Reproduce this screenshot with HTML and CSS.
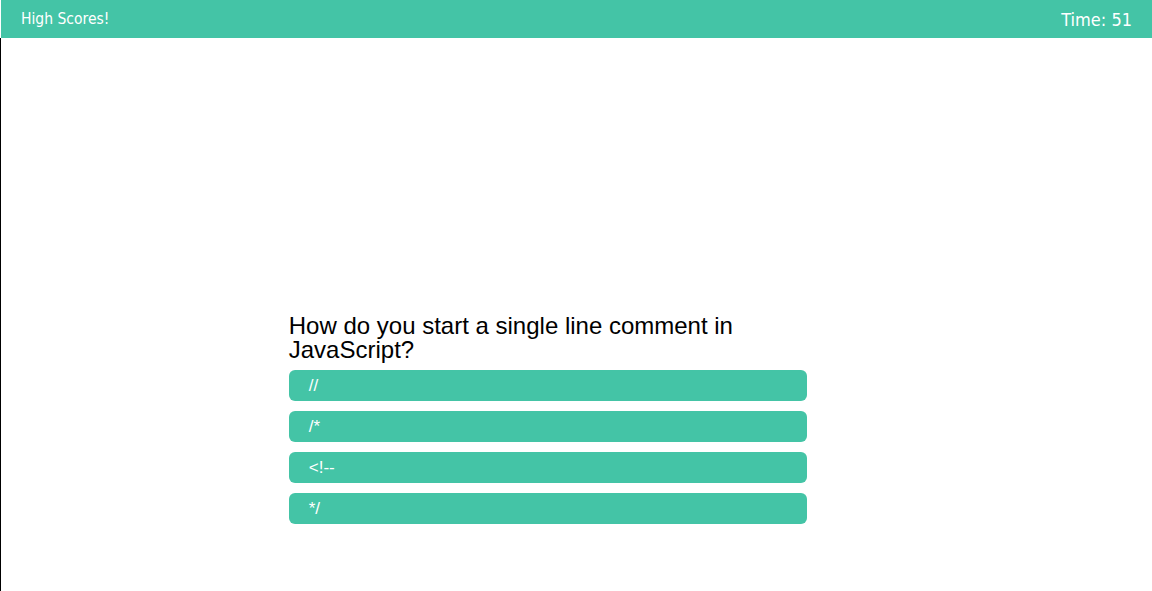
FILE: index.html
```html
<!DOCTYPE html>
<html>
<head>
<meta charset="utf-8">
<link rel="stylesheet" href="styles.css">
</head>
<body>
<header class="topbar">
  <a class="scores-link">High Scores!</a>
  <span class="timer">Time: 51</span>
</header>
<main class="page">
  <section class="quiz">
    <h2 class="question">How do you start a single line comment in JavaScript?</h2>
    <div class="choices">
      <button class="choice">//</button>
      <button class="choice">/*</button>
      <button class="choice">&lt;!--</button>
      <button class="choice">*/</button>
    </div>
  </section>
</main>
</body>
</html>
```

FILE: styles.css
```css
html, body {
  margin: 0;
  padding: 0;
  height: 100%;
  background: #fff;
}
body {
  display: flex;
  flex-direction: column;
  font-family: "Liberation Sans", Arial, sans-serif;
}
.topbar {
  margin-left: 1px;
  height: 38px;
  background: #44c4a6;
  display: flex;
  align-items: center;
  justify-content: space-between;
  padding: 0 20px;
  flex-shrink: 0;
  font-family: "DejaVu Sans Condensed", "DejaVu Sans", Tahoma, sans-serif;
  font-stretch: condensed;
  color: #fff;
}
.scores-link {
  font-size: 15.5px;
}
.timer {
  font-size: 18px;
}
.page {
  flex: 1;
  border-left: 1px solid #000;
  padding-top: 276px;
}
.quiz {
  margin-left: 25%;
  width: 45%;
}
.question {
  margin: 0 0 8px;
  font-size: 24px;
  line-height: 24px;
  font-weight: normal;
  color: #000;
}
.choices {
  display: flex;
  flex-direction: column;
  gap: 10px;
}
.choice {
  height: 31px;
  border: none;
  border-radius: 6px;
  background: #44c4a6;
  color: #fff;
  font-family: "Liberation Sans", Arial, sans-serif;
  font-size: 17px;
  text-align: left;
  padding: 0 20px;
}
```
